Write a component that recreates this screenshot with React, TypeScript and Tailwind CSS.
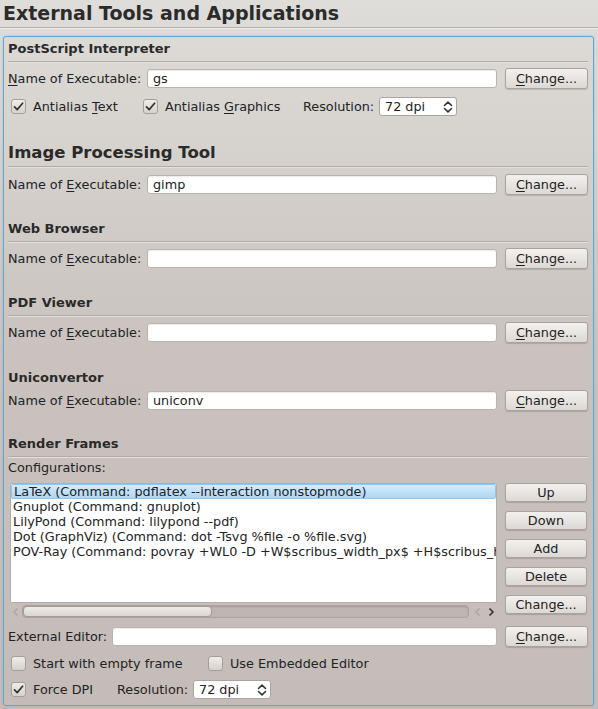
import React from "react";

const U = ({ children }: { children: React.ReactNode }) => (
  <span className="underline decoration-1 underline-offset-[2px]">{children}</span>
);

const Sep = () => <div className="h-[2px] border-t border-[#b0aba7] bg-[#e4e1de]" />;

function Btn({ children, className = "" }: { children: React.ReactNode; className?: string }) {
  return (
    <div
      className={`flex items-center justify-center rounded-[3px] border border-[#a8a39f] bg-[linear-gradient(to_bottom,#f3f1ef,#dcd8d4)] shadow-[0_1px_1px_rgba(0,0,0,0.15)] ${className}`}
    >
      {children}
    </div>
  );
}

function Input({ value = "", className = "" }: { value?: string; className?: string }) {
  return (
    <div
      className={`flex h-[19px] items-center rounded-[3px] border border-[#b9b4b0] bg-white pl-[5px] shadow-[inset_0_1px_1px_rgba(0,0,0,0.08)] ${className}`}
    >
      {value}
    </div>
  );
}

function Check({ checked }: { checked?: boolean }) {
  return (
    <div className="flex h-[15px] w-[15px] shrink-0 items-center justify-center rounded-[3px] border border-[#a49f9b] bg-[linear-gradient(to_bottom,#efece9,#d6d2ce)]">
      {checked && (
        <svg width="13" height="13" viewBox="0 0 13 13">
          <path d="M2.5 6.8 L5.2 9.6 L10.6 3.2" fill="none" stroke="#333" strokeWidth="1.7" strokeLinecap="round" strokeLinejoin="round" />
        </svg>
      )}
    </div>
  );
}

function Spin({ className = "" }: { className?: string }) {
  return (
    <div
      className={`flex h-[19px] items-center justify-between rounded-[3px] border border-[#aaa5a1] bg-white pl-[5px] pr-[2px] ${className}`}
    >
      <span>72 dpi</span>
      <svg width="12" height="14" viewBox="0 0 12 14">
        <path d="M2.5 5.5 L6 2.2 L9.5 5.5 M2.5 8.5 L6 11.8 L9.5 8.5" fill="none" stroke="#333" strokeWidth="1.6" strokeLinecap="round" strokeLinejoin="round" />
      </svg>
    </div>
  );
}

function Header({ title, className }: { title: string; className: string }) {
  return <div className={`flex items-end font-bold text-[13px] leading-[16px] text-[#2a2a2a] ${className}`}>{title}</div>;
}

function ExecRow({ value, first, className }: { value?: string; first?: boolean; className: string }) {
  return (
    <div className={`flex items-center pt-[1px] ${className}`}>
      <span className="w-[139px] shrink-0">
        {first ? (
          <>
            <U>N</U>ame of Executable:
          </>
        ) : (
          <>
            Name of <U>E</U>xecutable:
          </>
        )}
      </span>
      <Input value={value} className="flex-1" />
      <Btn className="ml-[8px] h-[21px] w-[83px]">
        <span>
          <U>C</U>hange...
        </span>
      </Btn>
    </div>
  );
}

const configs = [
  "LaTeX (Command: pdflatex --interaction nonstopmode)",
  "Gnuplot (Command: gnuplot)",
  "LilyPond (Command: lilypond --pdf)",
  "Dot (GraphViz) (Command: dot -Tsvg %file -o %file.svg)",
  "POV-Ray (Command: povray +WL0 -D +W$scribus_width_px$ +H$scribus_h",
];

export default function App() {
  return (
    <div className="h-[709px] w-[598px] overflow-hidden bg-[linear-gradient(to_bottom,#dfddd9_0%,#c9c2be_50%,#c4bcb8_100%)] font-['DejaVu_Sans',sans-serif] text-[12.8px] text-[#232323]">
      <div className="h-[27px] pl-[3px] pt-[1px] text-[19px] font-bold leading-[24px] text-[#2b2b2b]">External Tools and Applications</div>
      <div className="h-[2px] border-t border-[#b3aeaa] bg-[#efedea]" />

      <div className="ml-[3px] mt-[7px] h-[670px] w-[591px] rounded-[3px] border border-[#5da7db] pl-[4px] pr-[5px] shadow-[0_0_2px_rgba(80,160,220,0.5)]">
        <Header title="PostScript Interpreter" className="h-[24px] pb-[4px]" />
        <Sep />
        <ExecRow value="gs" first className="h-[30px]" />
        <div className="flex h-[26px] items-center pt-[1px]">
          <div className="ml-[3px] flex w-[132px] items-center">
            <Check checked />
            <span className="ml-[7px]">
              Antialias <U>T</U>ext
            </span>
          </div>
          <div className="flex w-[160px] items-center">
            <Check checked />
            <span className="ml-[7px]">
              Antialias <U>G</U>raphics
            </span>
          </div>
          <span className="w-[76px]">Resolution:</span>
          <Spin className="w-[78px]" />
        </div>

        <div className="flex h-[47px] items-end pb-[3px] text-[16.5px] font-bold leading-[20px] text-[#2a2a2a]">Image Processing Tool</div>
        <Sep />
        <ExecRow value="gimp" className="h-[32px]" />

        <Header title="Web Browser" className="h-[41px] pb-[4px]" />
        <Sep />
        <ExecRow className="h-[30px]" />

        <Header title="PDF Viewer" className="h-[42px] pb-[4px]" />
        <Sep />
        <ExecRow className="h-[30px]" />

        <Header title="Uniconvertor" className="h-[40px] pb-[1px]" />
        <ExecRow value="uniconv" className="h-[26px]" />

        <Header title="Render Frames" className="h-[43px] pb-[4px]" />
        <Sep />
        <div className="flex h-[18px] items-center pt-[1px]">Configurations:</div>

        <div className="mt-[7px] flex h-[137px]">
          <div className="ml-[2px] flex w-[487px] flex-col">
            <div className="h-[120px] overflow-hidden rounded-[2px] border border-[#b3aeaa] bg-white">
              {configs.map((c, i) => (
                <div
                  key={i}
                  className={`flex h-[15px] items-center overflow-hidden whitespace-nowrap pl-[2px] pt-[1px] ${
                    i === 0 ? "rounded-[2px] border border-[#93c6ec] bg-[linear-gradient(to_bottom,#d6ebfa,#aed6f4)] pl-[1px]" : ""
                  }`}
                >
                  {c}
                </div>
              ))}
            </div>
            <div className="flex h-[17px] items-center">
              <svg width="10" height="12" viewBox="0 0 10 12" className="ml-[1px]">
                <path d="M6.5 2.5 L3 6 L6.5 9.5" fill="none" stroke="#aaa5a1" strokeWidth="1.4" />
              </svg>
              <div className="ml-[1px] flex h-[13px] w-[448px] items-center rounded-[4px] border border-[#a9a4a0] bg-[#bdb6b2] shadow-[inset_0_1px_2px_rgba(0,0,0,0.15)]">
                <div className="h-[11px] w-[189px] rounded-[4px] border border-[#a19c98] bg-[linear-gradient(to_bottom,#eeebe8,#d9d5d1)]" />
              </div>
              <svg width="12" height="12" viewBox="0 0 12 12" className="ml-[3px]">
                <path d="M7.5 2.5 L4 6 L7.5 9.5" fill="none" stroke="#aaa5a1" strokeWidth="1.4" />
              </svg>
              <svg width="12" height="12" viewBox="0 0 12 12" className="ml-[1px]">
                <path d="M4.5 2.5 L8 6 L4.5 9.5" fill="none" stroke="#333" strokeWidth="1.6" />
              </svg>
            </div>
          </div>
          <div className="ml-[8px] flex w-[82px] flex-col gap-[9px]">
            <Btn className="h-[19px]">Up</Btn>
            <Btn className="h-[19px]">Down</Btn>
            <Btn className="h-[19px]">Add</Btn>
            <Btn className="h-[19px]">Delete</Btn>
            <Btn className="h-[19px]">Change...</Btn>
          </div>
        </div>

        <div className="flex h-[32px] items-center pt-[1px]">
          <span className="w-[104px] shrink-0">External Editor:</span>
          <Input className="flex-1" />
          <Btn className="ml-[8px] h-[21px] w-[83px]">
            <span>
              <U>C</U>hange...
            </span>
          </Btn>
        </div>

        <div className="flex h-[22px] items-center pt-[1px]">
          <div className="ml-[3px] flex w-[197px] items-center">
            <Check />
            <span className="ml-[7px]">Start with empty frame</span>
          </div>
          <div className="flex items-center">
            <Check />
            <span className="ml-[7px]">Use Embedded Editor</span>
          </div>
        </div>

        <div className="flex h-[30px] items-center pt-[1px]">
          <div className="ml-[3px] flex w-[106px] items-center">
            <Check checked />
            <span className="ml-[7px]">Force DPI</span>
          </div>
          <span className="w-[76px]">Resolution:</span>
          <Spin className="w-[78px]" />
        </div>
      </div>
    </div>
  );
}
